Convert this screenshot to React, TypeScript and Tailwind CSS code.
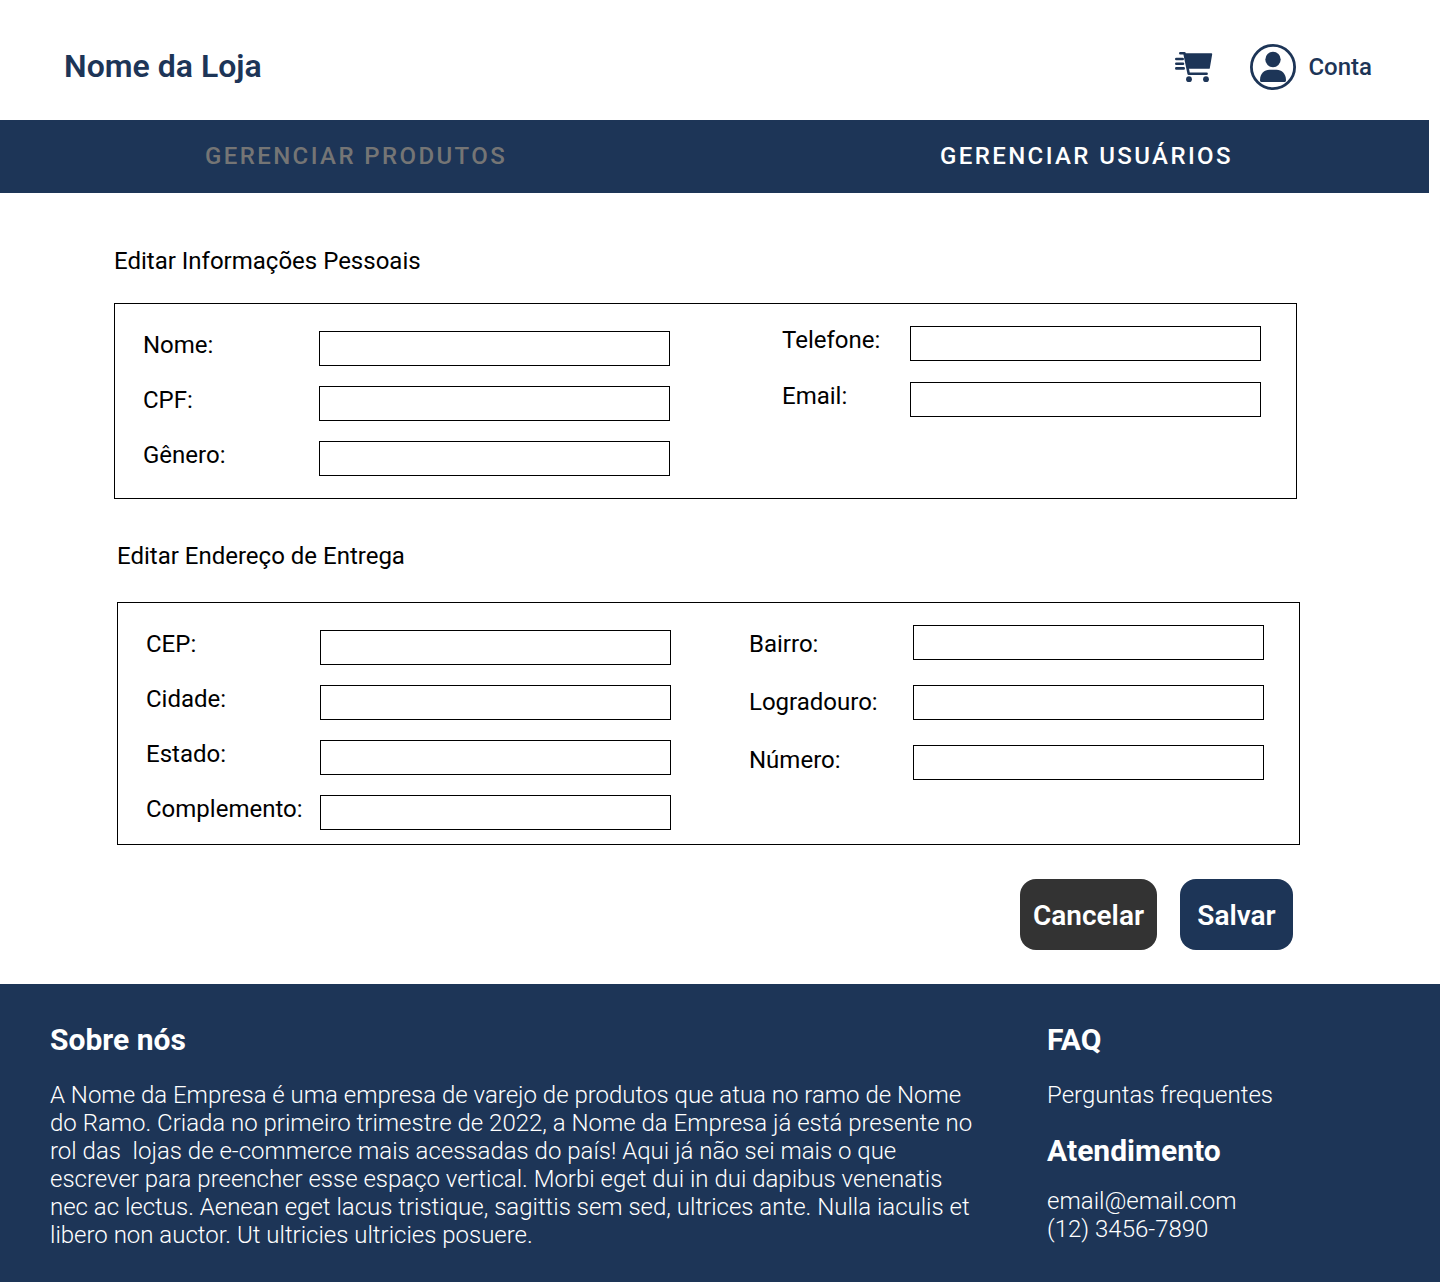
import React from "react";

type Field = { id: string; label: string; type?: string };

function FieldGroup({
  fields,
  labels,
  inputs,
}: {
  fields: Field[];
  labels: string;
  inputs: string;
}) {
  return (
    <div className="flex items-start">
      <div className={`flex shrink-0 flex-col ${labels}`}>
        {fields.map((f) => (
          <label key={f.id} htmlFor={f.id}>
            {f.label}
          </label>
        ))}
      </div>
      <div className={`flex flex-col ${inputs}`}>
        {fields.map((f) => (
          <input
            key={f.id}
            id={f.id}
            name={f.id}
            type={f.type ?? "text"}
            className="h-[35px] w-[351px] border border-black bg-white px-2 text-xl"
          />
        ))}
      </div>
    </div>
  );
}

function CartIcon() {
  return (
    <svg width="40" height="34" viewBox="0 0 40 34" fill="none" stroke="#1d3557" strokeWidth="2.6" strokeLinecap="round" aria-hidden="true">
      <path d="M2.300 9h6.400M2.300 13.700h6.700M2.300 18.400h7.400" />
      <path d="M6.300 3.200h4.200l4.200 20.600h17.900" strokeLinejoin="round" />
      <path d="M12 4h25.400L35 18H14.600z" fill="#1d3557" strokeWidth="1.600" strokeLinejoin="round" />
      <circle cx="15" cy="29.200" r="2.900" fill="#1d3557" stroke="none" />
      <circle cx="32" cy="29.200" r="2.900" fill="#1d3557" stroke="none" />
    </svg>
  );
}

function AccountIcon() {
  return (
    <svg width="46" height="46" viewBox="0 0 46 46" fill="#1d3557" aria-hidden="true">
      <circle cx="23" cy="23" r="21.6" fill="none" stroke="#1d3557" strokeWidth="2.8" />
      <circle cx="23" cy="15.5" r="7.7" />
      <path d="M10 36.2c0-6.4 4.400-10.400 9.400-10.400h7.200c5 0 9.400 4 9.400 10.400 0 1-.6 1.800-1.800 1.800H11.800c-1.200 0-1.800-.8-1.800-1.800z" />
    </svg>
  );
}

const personalLeft: Field[] = [
  { id: "nome", label: "Nome:" },
  { id: "cpf", label: "CPF:" },
  { id: "genero", label: "Gênero:" },
];
const personalRight: Field[] = [
  { id: "telefone", label: "Telefone:", type: "tel" },
  { id: "email", label: "Email:", type: "email" },
];
const addressLeft: Field[] = [
  { id: "cep", label: "CEP:" },
  { id: "cidade", label: "Cidade:" },
  { id: "estado", label: "Estado:" },
  { id: "complemento", label: "Complemento:" },
];
const addressRight: Field[] = [
  { id: "bairro", label: "Bairro:" },
  { id: "logradouro", label: "Logradouro:" },
  { id: "numero", label: "Número:" },
];

export default function App() {
  return (
    <div className="bg-white font-['Roboto',sans-serif] text-2xl leading-7 text-black">
      <header className="flex h-[120px] items-center justify-between pt-3 pr-[68px] pl-16 text-[#1d3557]">
        <a href="#" className="text-[32px] leading-9 font-semibold">
          Nome da Loja
        </a>
        <div className="flex items-center gap-9 pt-0.5">
          <a href="#carrinho" aria-label="Carrinho">
            <CartIcon />
          </a>
          <a href="#conta" className="flex items-center gap-3 font-medium">
            <AccountIcon />
            Conta
          </a>
        </div>
      </header>

      <nav className="mr-[11px] flex h-[73px] items-center justify-between bg-[#1d3557] pr-[196px] pb-0.5 pl-[205px] font-medium tracking-widest">
        <a href="#produtos" className="text-[#757575]">
          GERENCIAR PRODUTOS
        </a>
        <a href="#usuarios" className="text-white">
          GERENCIAR USUÁRIOS
        </a>
      </nav>

      <form onSubmit={(e) => e.preventDefault()}>
        <section className="pt-[54px] pr-[143px] pl-[114px]">
          <h2>Editar Informações Pessoais</h2>
          <div className="mt-7 flex flex-wrap items-start justify-between border border-black pt-[22px] pr-[35px] pb-[22px] pl-7">
            <div className="pt-[5px]">
              <FieldGroup fields={personalLeft} labels="w-44 gap-[27px]" inputs="gap-5" />
            </div>
            <FieldGroup fields={personalRight} labels="w-32 gap-7" inputs="gap-[21px]" />
          </div>
        </section>

        <section className="pt-[43px] pr-[140px] pl-[117px]">
          <h2>Editar Endereço de Entrega</h2>
          <div className="mt-8 flex flex-wrap items-start justify-between border border-black pt-[22px] pr-[35px] pb-[14px] pl-7">
            <div className="pt-[5px]">
              <FieldGroup fields={addressLeft} labels="w-[174px] gap-[27px]" inputs="gap-5" />
            </div>
            <FieldGroup fields={addressRight} labels="w-[164px] gap-[30px] pt-[5px]" inputs="gap-[25px]" />
          </div>
        </section>

        <div className="flex justify-end gap-[23px] pt-[34px] pr-[147px] pb-[34px] text-[28px] leading-8 font-semibold text-white">
          <button type="button" className="h-[71px] w-[137px] rounded-2xl bg-[#333333] pt-0.5">
            Cancelar
          </button>
          <button type="submit" className="h-[71px] w-[113px] rounded-2xl bg-[#1d3557] pt-0.5">
            Salvar
          </button>
        </div>
      </form>

      <footer className="flex justify-between gap-8 bg-[#1d3557] pt-[38px] pr-[167px] pb-[33px] pl-[50px] font-light text-white">
        <section className="max-w-[930px]">
          <h2 className="text-[30px] leading-9 font-bold">Sobre nós</h2>
          <p className="mt-[23px] whitespace-pre-wrap">
            {
              "A Nome da Empresa é uma empresa de varejo de produtos que atua no ramo de Nome do Ramo. Criada no primeiro trimestre de 2022, a Nome da Empresa já está presente no rol das  lojas de e-commerce mais acessadas do país! Aqui já não sei mais o que escrever para preencher esse espaço vertical. Morbi eget dui in dui dapibus venenatis nec ac lectus. Aenean eget lacus tristique, sagittis sem sed, ultrices ante. Nulla iaculis et libero non auctor. Ut ultricies ultricies posuere."
            }
          </p>
        </section>
        <section className="shrink-0">
          <h2 className="text-[30px] leading-9 font-bold">FAQ</h2>
          <a href="#faq" className="mt-[23px] block">
            Perguntas frequentes
          </a>
          <h2 className="mt-6 text-[30px] leading-9 font-bold">Atendimento</h2>
          <address className="mt-[18px] flex flex-col not-italic">
            <a href="mailto:email@email.com">email@email.com</a>
            <a href="tel:+551234567890">(12) 3456-7890</a>
          </address>
        </section>
      </footer>
    </div>
  );
}
